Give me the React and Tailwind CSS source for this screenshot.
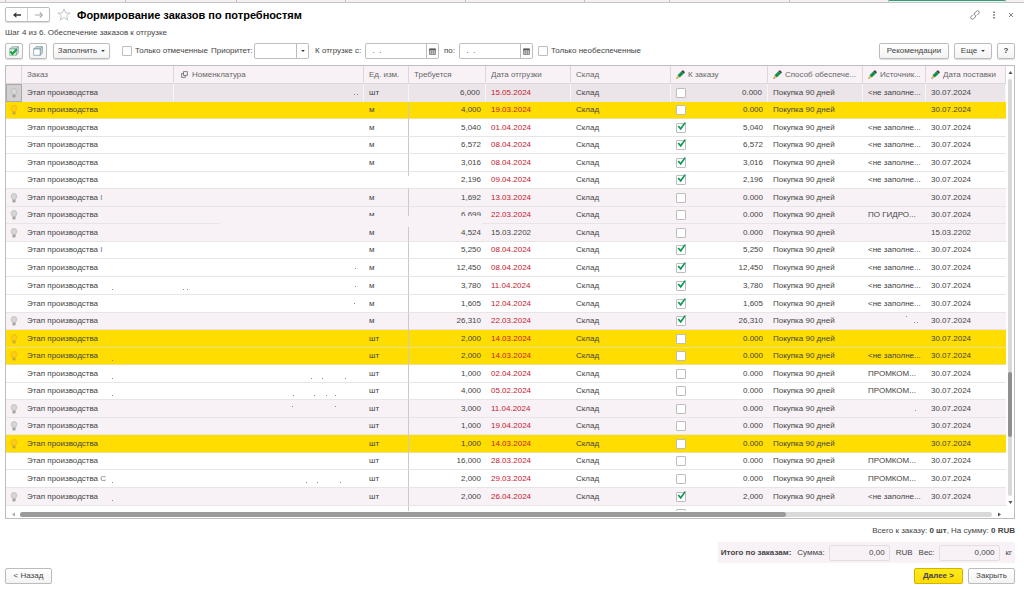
import { useState } from "react";
import clsx from "clsx";

const EMPTY = "<не заполне...";

// "tail" is what is left of the order number after the name
const ROWS = [
  { unit: "шт", need: "6,000", ship: "15.05.2024", source: EMPTY, kind: "current" },
  { unit: "м", need: "4,000", ship: "19.03.2024", kind: "warn" },
  { unit: "м", need: "5,040", ship: "01.04.2024", order: "5,040", source: EMPTY },
  { unit: "м", need: "6,572", ship: "08.04.2024", order: "6,572", source: EMPTY },
  { unit: "м", need: "3,016", ship: "08.04.2024", order: "3,016", source: EMPTY },
  { unit: "", need: "2,196", ship: "09.04.2024", order: "2,196", source: EMPTY },
  { tail: "I", unit: "м", need: "1,692", ship: "13.03.2024", kind: "muted" },
  { unit: "м", need: "6,699", ship: "22.03.2024", source: "ПО ГИДРО...", kind: "muted" },
  { unit: "м", need: "4,524", ship: "15.03.2202", inTime: true, date: "15.03.2202", kind: "muted" },
  { tail: "I", unit: "м", need: "5,250", ship: "08.04.2024", order: "5,250", source: EMPTY },
  { unit: "м", need: "12,450", ship: "08.04.2024", order: "12,450", source: EMPTY },
  { unit: "м", need: "3,780", ship: "11.04.2024", order: "3,780", source: EMPTY },
  { unit: "м", need: "1,605", ship: "12.04.2024", order: "1,605", source: EMPTY },
  { unit: "м", need: "26,310", ship: "22.03.2024", order: "26,310", kind: "muted" },
  { unit: "шт", need: "2,000", ship: "14.03.2024", kind: "warn" },
  { unit: "шт", need: "2,000", ship: "14.03.2024", source: EMPTY, kind: "warn" },
  { unit: "шт", need: "1,000", ship: "02.04.2024", source: "ПРОМКОМ..." },
  { unit: "шт", need: "4,000", ship: "05.02.2024", source: "ПРОМКОМ..." },
  { unit: "шт", need: "3,000", ship: "11.04.2024", kind: "muted" },
  { unit: "шт", need: "1,000", ship: "19.04.2024", kind: "muted" },
  { unit: "шт", need: "1,000", ship: "14.03.2024", kind: "warn" },
  { unit: "шт", need: "16,000", ship: "28.03.2024", source: "ПРОМКОМ..." },
  { tail: "С", unit: "шт", need: "2,000", ship: "29.03.2024", source: "ПРОМКОМ..." },
  { unit: "шт", need: "2,000", ship: "26.04.2024", order: "2,000", source: EMPTY, kind: "muted" },
];

const SPECKS = [
  [348, 28], [351, 28], [106, 223], [177, 223], [181, 223], [349, 202], [349, 220], [348, 237],
  [106, 294], [106, 312], [305, 312], [316, 312], [339, 312], [106, 329], [287, 329],
  [308, 329], [320, 329], [329, 329], [286, 340], [329, 340], [106, 416], [300, 416],
  [311, 416], [334, 416], [106, 434], [900, 250], [908, 256], [911, 256], [909, 344],
];

const rowBg = {
  current: "bg-[#ebe5ea]",
  warn: "bg-[#ffdd00]",
  muted: "bg-[#f8f2f7]",
};

const button =
  "flex items-center justify-center h-4 border border-[#bcbcbc] rounded-[2px] bg-linear-to-b from-white to-[#f3f3f3] shadow-[0_1px_1px_#dcdcdc] text-[#444] whitespace-nowrap";
const field = "h-4 border border-[#bdbdbd] rounded-[2px] bg-white flex";

function Caret() {
  return (
    <svg viewBox="0 0 4 2" className="w-1 h-[2px]">
      <path d="M0.2 0h3.6L2 2z" fill="#333" />
    </svg>
  );
}

function Arrow({ dir, color }) {
  const d = {
    up: "M0.5 4L2.5 1L4.5 4z",
    down: "M0.5 1L2.5 4L4.5 1z",
    left: "M4 0.5L1 2.5L4 4.5z",
    right: "M1 0.5L4 2.5L1 4.5z",
  };
  return (
    <svg viewBox="0 0 5 5" className="w-[5px] h-[5px] shrink-0">
      <path d={d[dir]} fill={color || "#555"} />
    </svg>
  );
}

function CheckBox({ id, label, defaultChecked = false }) {
  const [on, setOn] = useState(defaultChecked);
  return (
    <span className="relative block w-[10px] h-[10px] shrink-0">
      <input
        id={id}
        type="checkbox"
        aria-label={label}
        checked={on}
        onChange={(e) => setOn(e.target.checked)}
        className="block appearance-none w-[10px] h-[10px] border border-[#bdbdbd] rounded-[1px] bg-white"
      />
      {on && (
        <svg viewBox="0 0 12 12" className="absolute -top-[2px] left-0 w-3 h-3 pointer-events-none">
          <path d="M1.5 5.4L2.9 4.4L4.5 6.4L8.6 1.2L10 1.7L4.8 9.2z" fill="#0c9a55" />
        </svg>
      )}
    </span>
  );
}

function Pencil() {
  return (
    <svg viewBox="0 0 10 10" className="w-[9px] h-[9px] shrink-0">
      <path d="M1.6 5.8L5.9 1.5L8.7 4.2L4.3 8.4z" fill="#1ca35c" />
      <path d="M2.6 6.7L6.9 2.5L7.8 3.3L3.5 7.6z" fill="#0c7f43" />
      <path d="M5.9 1.5L7 0.5Q7.8 0 8.6 0.8L9.4 1.6Q10.1 2.4 9.5 3.2L8.7 4.2z" fill="#4b4540" />
      <path d="M1.6 5.8L4.3 8.4L0.5 9.6z" fill="#efb04a" />
      <path d="M0.9 8.3L1.8 9.2L0.5 9.6z" fill="#333" />
    </svg>
  );
}

function Bulb({ warn }) {
  return (
    <svg viewBox="0 0 8 10" className="block mx-auto w-2 h-[10px]">
      <path
        d="M4 0.6C2.2 0.6 1.1 1.8 1.1 3.3C1.1 4.7 2.3 5.2 2.5 6.6H5.5C5.7 5.2 6.9 4.7 6.9 3.3C6.9 1.8 5.8 0.6 4 0.6z"
        fill={warn ? "#ffcc1a" : "#d6d6d6"}
        stroke={warn ? "#f2b000" : "#b5b5b5"}
        strokeWidth="0.7"
      />
      <path d="M2.5 6.8H5.5V9.4H2.5z" fill={warn ? "#c5a948" : "#a0a0a0"} />
    </svg>
  );
}

function Calendar() {
  return (
    <svg viewBox="0 0 7 7" className="w-[7px] h-[7px]">
      <path d="M0.5 1H6.5V6.5H0.5z" fill="#eee" stroke="#777" strokeWidth="0.8" />
      <path d="M0.3 0.6H6.7V2.4H0.3z" fill="#555" />
      <path d="M1 3.7H6M1 5.1H6M2.4 2.5V6.3M4.5 2.5V6.3" stroke="#777" strokeWidth="0.6" />
    </svg>
  );
}

function DateField({ id, label }) {
  return (
    <>
      <label htmlFor={id}>{label}</label>
      <div className={clsx(field, "w-[74px] ml-1")}>
        <input id={id} defaultValue=" .  ." className="min-w-0 flex-1 px-1 whitespace-pre outline-none" />
        <button aria-label="Календарь" className="w-3 border-l border-[#bdbdbd] flex items-center justify-center">
          <Calendar />
        </button>
      </div>
    </>
  );
}

function TopTabs() {
  const tabs = ["w-[6px]", "w-[120px]", "w-[111px]", "w-[109px]", "w-[120px]", "w-[119px]", "w-[85px]", "w-[120px]", "w-[99px]"];
  return (
    <div className="h-[3px] flex border-b border-[#c6c6c6] bg-[#f4eff3]">
      {tabs.map((w, i) => (
        <div key={i} className={clsx(w, "border-r border-[#c0c0c0]")} />
      ))}
      <div className="w-[116px] h-px bg-[#2f9f75]" />
      <div className="flex-1 border-l border-[#c0c0c0]" />
    </div>
  );
}

function Header() {
  return (
    <header className="flex items-center h-[15px] mt-1">
      <div className="flex h-[15px] w-[45px] border border-[#bcbcbc] rounded-[2px] shadow-[0_1px_1px_#dcdcdc]">
        <button aria-label="Назад" className="flex-1 flex items-center justify-center border-r border-[#d0d0d0]">
          <svg viewBox="0 0 10 8" className="w-[10px] h-2">
            <path d="M9 4H3" fill="none" stroke="#333" strokeWidth="1.5" />
            <path d="M1 4L4.4 1.3V3L3.6 4L4.4 5V6.7z" fill="#333" />
          </svg>
        </button>
        <button aria-label="Вперед" className="flex-1 flex items-center justify-center">
          <svg viewBox="0 0 10 8" className="w-[10px] h-2">
            <path d="M1 4H7.6" fill="none" stroke="#a9a9a9" strokeWidth="1" />
            <path d="M5.8 1.5L8.4 4L5.8 6.5" fill="none" stroke="#a9a9a9" strokeWidth="1.1" />
          </svg>
        </button>
      </div>
      <svg viewBox="0 0 14 13" className="w-[14px] h-[13px] ml-[7px]">
        <path
          d="M7 0.8L8.6 5H13.2L9.6 7.7L10.9 12.2L7 9.5L3.1 12.2L4.4 7.7L0.8 5H5.4z"
          fill="none"
          stroke="#b8b8b8"
          strokeWidth="0.8"
        />
      </svg>
      <h1 className="ml-[6px] text-[11px] leading-[14px] font-bold text-black">Формирование заказов по потребностям</h1>
      <div className="ml-auto flex items-center gap-[10px]">
        <button aria-label="Ссылка">
          <svg viewBox="0 0 10 10" className="block w-[10px] h-[10px]" fill="none" stroke="#777" strokeWidth="0.9">
            <path d="M4.2 5.4Q3.8 4 4.8 3L6.3 1.3Q7.6 0.2 8.8 1.2Q9.8 2.4 8.7 3.7L7.4 5" />
            <path d="M5.8 4.6Q6.2 6 5.2 7L3.7 8.7Q2.4 9.8 1.2 8.8Q0.2 7.6 1.3 6.3L2.6 5" />
          </svg>
        </button>
        <button aria-label="Меню">
          <svg viewBox="0 0 8 8" className="block w-2 h-2" fill="#555">
            <path d="M3.3 0.6h1.4v1.4h-1.4zM3.3 3.3h1.4v1.4h-1.4zM3.3 6h1.4v1.4h-1.4z" />
          </svg>
        </button>
        <button aria-label="Закрыть форму" className="mr-px">
          <svg viewBox="0 0 6 6" className="block w-[6px] h-[6px]">
            <path d="M1 1L5 5M5 1L1 5" stroke="#666" strokeWidth="0.8" />
          </svg>
        </button>
      </div>
    </header>
  );
}

function Toolbar() {
  return (
    <div className="flex items-center h-4 mt-[5px] whitespace-nowrap">
      <button aria-label="Отметить все" className={clsx(button, "w-[18px]")}>
        <svg viewBox="0 0 10 10" className="w-[10px] h-[10px]">
          <path d="M0.7 3L3 0.7H9.4V6.8L7.2 9.3V3z" fill="#cfdcdf" stroke="#6f8f96" strokeWidth="0.6" />
          <path d="M7.2 3L9.4 0.7" stroke="#6f8f96" strokeWidth="0.6" />
          <path d="M0.7 3H7.2V9.3H0.7z" fill="#e2f3ea" stroke="#6f9f8a" strokeWidth="0.6" />
          <path d="M1.3 5.4L3.4 8L7.8 3.2" fill="none" stroke="#14a53a" strokeWidth="2" />
        </svg>
      </button>
      <button aria-label="Снять отметки" className={clsx(button, "w-[18px] ml-[6px]")}>
        <svg viewBox="0 0 10 10" className="w-[10px] h-[10px]" stroke="#6d909c" strokeWidth="0.7">
          <path d="M0.7 3L3 0.7H9.4V6.8L7.2 9.3V3z" fill="#cddbe0" />
          <path d="M7.2 3L9.4 0.7" />
          <path d="M0.7 3H7.2V9.3H0.7z" fill="#fff" />
        </svg>
      </button>
      <button className={clsx(button, "w-[57px] ml-[6px] gap-1")}>
        Заполнить <Caret />
      </button>
      <div className="ml-3 flex items-center gap-[3px] w-[84px]">
        <CheckBox id="marked" />
        <label htmlFor="marked">Только отмеченные</label>
      </div>
      <label htmlFor="priority" className="ml-[5px] w-[43px]">Приоритет:</label>
      <div className={clsx(field, "relative w-[55px]")}>
        <select id="priority" className="appearance-none flex-1 min-w-0 px-1">
          <option></option>
        </select>
        <span className="absolute inset-y-0 right-0 w-3 border-l border-[#bdbdbd] flex items-center justify-center pointer-events-none">
          <Caret />
        </span>
      </div>
      <div className="ml-[6px] flex items-center w-[123px]">
        <DateField id="from" label="К отгрузке с:" />
      </div>
      <div className="ml-[6px] flex items-center w-[89px]">
        <DateField id="to" label="по:" />
      </div>
      <div className="ml-[5px] flex items-center gap-[3px]">
        <CheckBox id="unsupplied" />
        <label htmlFor="unsupplied">Только необеспеченные</label>
      </div>
      <div className="ml-auto flex gap-[5px]">
        <button className={clsx(button, "w-[70px]")}>Рекомендации</button>
        <button className={clsx(button, "w-[38px] gap-1")}>
          Еще <Caret />
        </button>
        <button className={clsx(button, "w-[18px] font-bold")}>?</button>
      </div>
    </div>
  );
}

function HeadCell({ children, edit }) {
  return (
    <th className="h-[18px] px-[5px] border-r border-b border-[#ddd6db] font-normal text-left text-[#666]">
      <div className="flex items-center gap-[3px] overflow-hidden">
        {edit && <Pencil />}
        <span className="whitespace-nowrap">{children}</span>
      </div>
    </th>
  );
}

function Row({ row, tall }) {
  const current = row.kind === "current";
  const line = row.kind === "warn" ? "border-[#f0e08a]" : "border-[#e8e5e7]";
  const cell = clsx("px-[5px] border-b overflow-hidden", line, current && "border-r border-r-[#f8f5f7]");
  return (
    <tr className={clsx(tall ? "h-[18px]" : "h-[17px]", rowBg[row.kind])}>
      <td className={current ? "bg-[#d3d0d2] border border-[#a9a9a9]" : clsx("border-b", line)}>
        {row.kind && <Bulb warn={row.kind === "warn"} />}
      </td>
      <td className={cell}>
        Этап производства
        {row.tail && <span className="text-[#777]"> {row.tail}</span>}
      </td>
      <td className={cell}></td>
      <td className={clsx(cell, "border-r border-r-[#cbc8ca]")}>{row.unit}</td>
      <td className={clsx(cell, "text-right")}>{row.need}</td>
      <td className={clsx(cell, !row.inTime && "text-[#c5202c]")}>{row.ship}</td>
      <td className={cell}>Склад</td>
      <td className={cell}>
        <div className="flex items-center justify-between">
          <CheckBox label="К заказу" defaultChecked={Boolean(row.order)} />
          {row.order || "0.000"}
        </div>
      </td>
      <td className={cell}>Покупка 90 дней</td>
      <td className={cell}>{row.source}</td>
      <td className={cell}>{row.date || "30.07.2024"}</td>
    </tr>
  );
}

function Orders() {
  return (
    <div className="mt-[6px] border border-[#bdbdbd]">
      <div className="flex">
        <div className="relative flex-1 min-w-0 max-h-[445px] overflow-hidden">
          <table className="table-fixed w-full border-separate border-spacing-0 whitespace-nowrap">
            <colgroup>
              <col className="w-4" />
              <col className="w-[152px]" />
              <col />
              <col className="w-[45px]" />
              <col className="w-[77px]" />
              <col className="w-[85px]" />
              <col className="w-[100px]" />
              <col className="w-[97px]" />
              <col className="w-[95px]" />
              <col className="w-[63px]" />
              <col className="w-[80px]" />
            </colgroup>
            <thead className="bg-[#f8f2f7]">
              <tr>
                <HeadCell />
                <HeadCell>Заказ</HeadCell>
                <HeadCell>
                  <span className="flex items-center gap-1 pl-[2px]">
                    <svg viewBox="0 0 7 7" className="w-[7px] h-[7px]" fill="none" stroke="#666" strokeWidth="0.8">
                      <path d="M2.5 0.6H6.4V4.4H2.5zM2.4 2.5H0.6V6.4H4.4V4.6" />
                    </svg>
                    Номенклатура
                  </span>
                </HeadCell>
                <HeadCell>Ед. изм.</HeadCell>
                <HeadCell>Требуется</HeadCell>
                <HeadCell>Дата отгрузки</HeadCell>
                <HeadCell>Склад</HeadCell>
                <HeadCell edit>К заказу</HeadCell>
                <HeadCell edit>Способ обеспече...</HeadCell>
                <HeadCell edit>Источник...</HeadCell>
                <HeadCell edit>Дата поставки</HeadCell>
              </tr>
            </thead>
            <tbody>
              {ROWS.map((row, i) => (
                <Row key={i} row={row} tall={i % 2 === 0 || i % 12 === 11} />
              ))}
              <tr>
                <td colSpan={3}></td>
                <td className="border-r border-[#cbc8ca]"></td>
                <td colSpan={3}></td>
                <td className="px-[5px] pt-[3px]">
                  <CheckBox label="К заказу" />
                </td>
                <td colSpan={3}></td>
              </tr>
            </tbody>
          </table>
          {/* erased patches and leftover specks over the cells */}
          <svg className="absolute top-0 left-0 w-full h-full pointer-events-none">
            <rect x="214" y="150" width="262" height="11" fill="#f8f2f7" />
            <rect x="400" y="110" width="6" height="12" fill="#fff" />
            {SPECKS.map(([x, y]) => (
              <rect key={x + "-" + y} x={x} y={y} width="1" height="1" fill="#8a8a8a" />
            ))}
          </svg>
        </div>
        <div className="w-2 flex flex-col items-center pt-1 pb-[6px]">
          <Arrow dir="up" />
          <div className="flex-1 flex flex-col w-1 my-1 rounded-full bg-[#d9d9d9]">
            <div className="grow-[292]" />
            <div className="grow-[65] rounded-full bg-[#8f8f8f]" />
            <div className="grow-[59]" />
          </div>
          <Arrow dir="down" />
        </div>
      </div>
      <div className="h-[7px] flex items-center pl-[5px] pr-3">
        <Arrow dir="left" color="#aaa" />
        <div className="flex-1 flex h-[5px] ml-1 mr-[5px] rounded-full bg-[#d9d9d9]">
          <div className="grow-[765] rounded-full bg-[#9a9a9a]" />
          <div className="grow-[206]" />
        </div>
        <Arrow dir="right" />
      </div>
    </div>
  );
}

function Totals() {
  const total = "h-4 w-[61px] px-1 text-right bg-transparent border border-[#e3dce1] rounded-[2px]";
  return (
    <div className="flex flex-col items-end">
      <p className="mt-[7px]">
        Всего к заказу: <b>0 шт</b>, На сумму: <b>0 RUB</b>
      </p>
      <div className="mt-[6px] h-[21px] flex items-center bg-[#f8f2f7] px-[3px]">
        <b className="mr-[6px]">Итого по заказам:</b>
        <label htmlFor="sum" className="mr-1">Сумма:</label>
        <input id="sum" readOnly value="0,00" className={total} />
        <span className="ml-[6px] mr-[6px]">RUB</span>
        <label htmlFor="weight" className="mr-1">Вес:</label>
        <input id="weight" readOnly value="0,000" className={total} />
        <span className="ml-[6px]">кг</span>
      </div>
    </div>
  );
}

function App() {
  return (
    <div className="bg-white text-[#444] text-[8px] leading-[10px] font-['Liberation_Sans',Arial,sans-serif]">
      <TopTabs />
      <main className="pl-[5px] pr-[9px]">
        <Header />
        <p className="mt-[6px]">Шаг 4 из 6. Обеспечение заказов к отгрузке</p>
        <Toolbar />
        <Orders />
        <Totals />
        <footer className="mt-[5px] flex items-center gap-[5px]">
          <button className={clsx(button, "w-[47px] mr-auto")}>&lt; Назад</button>
          <button className="w-[49px] h-4 border border-[#d0b400] rounded-[2px] bg-linear-to-b from-[#ffea1a] to-[#ffdc00] shadow-[0_1px_1px_#dcdcdc] font-bold">
            Далее &gt;
          </button>
          <button className={clsx(button, "w-[47px]")}>Закрыть</button>
        </footer>
      </main>
    </div>
  );
}

export default App;
